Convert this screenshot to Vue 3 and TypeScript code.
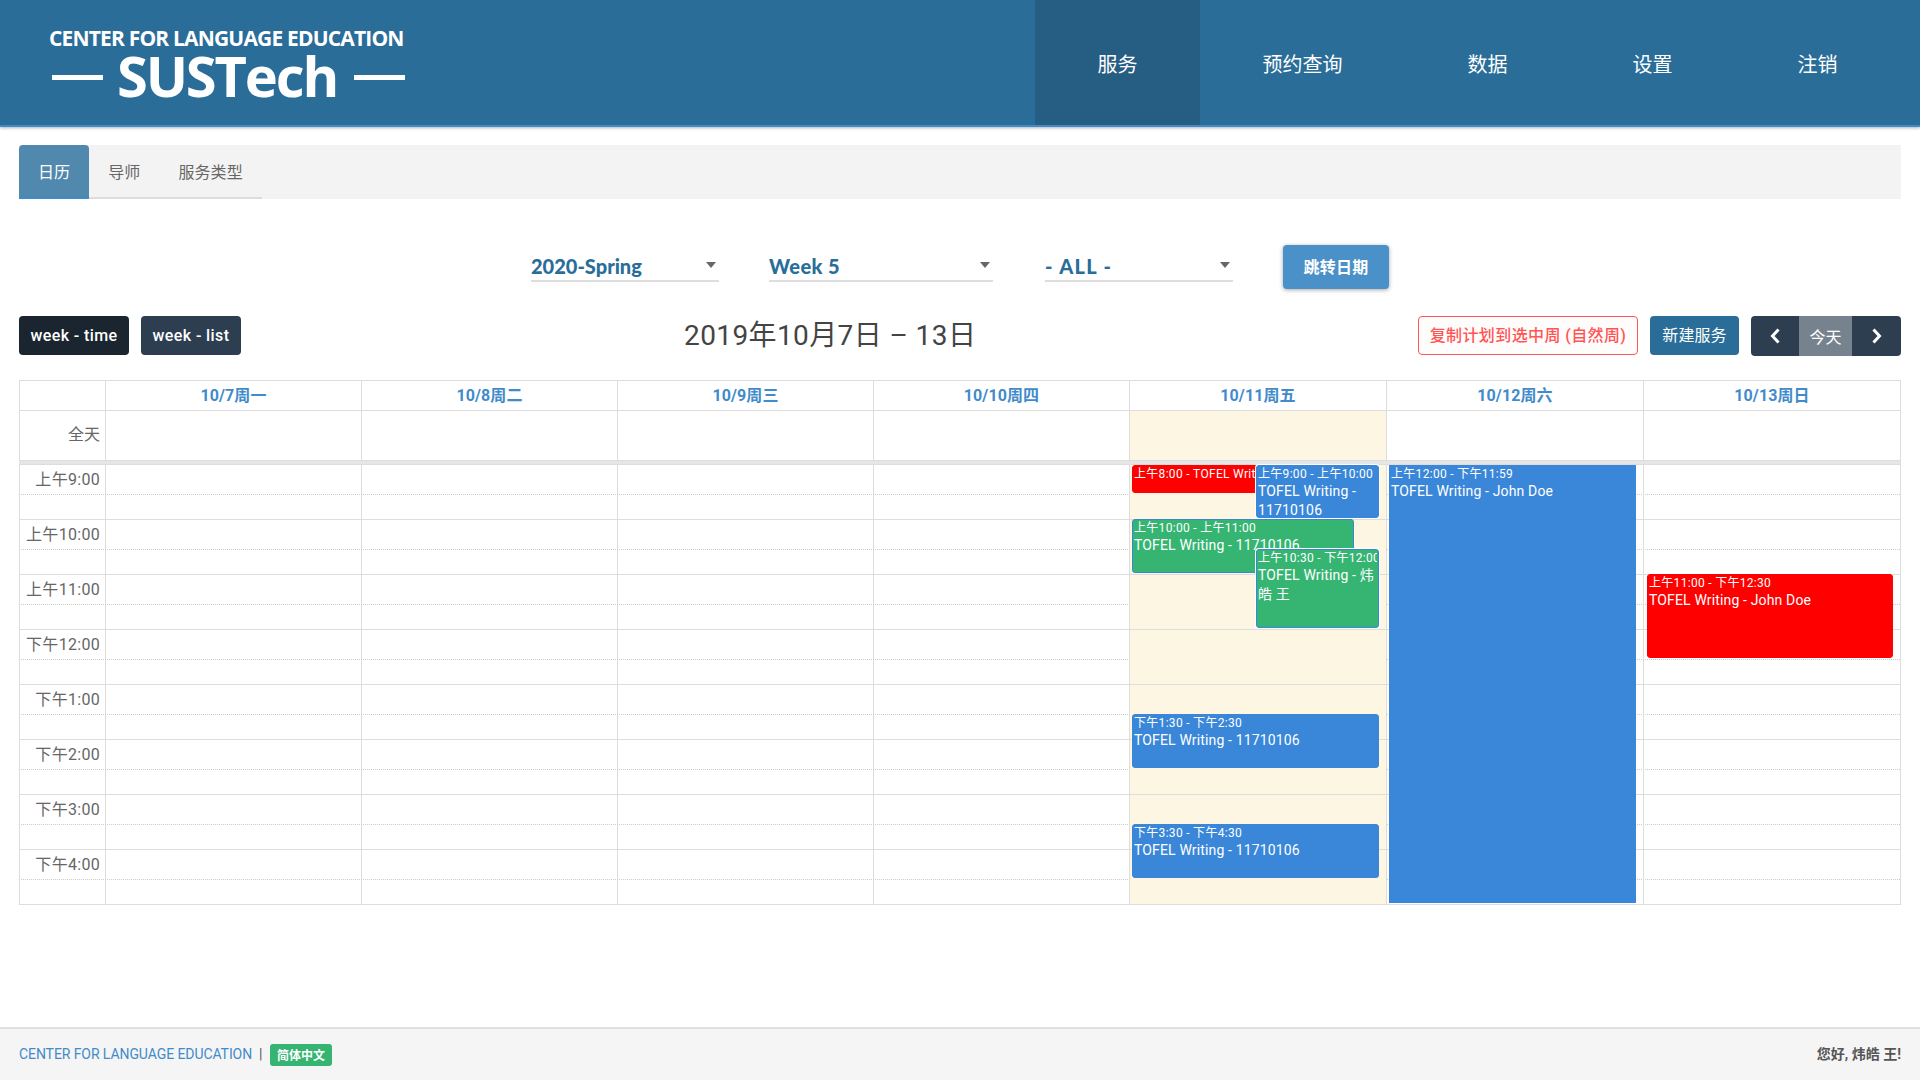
<script setup lang="ts">
interface Ev { cls: string; style: Record<string, string>; time: string; title: string }
const navItems = ['服务', '预约查询', '数据', '设置', '注销']
const tabs = ['日历', '导师', '服务类型']
const days = [
  { label: '10/7周一', today: false },
  { label: '10/8周二', today: false },
  { label: '10/9周三', today: false },
  { label: '10/10周四', today: false },
  { label: '10/11周五', today: true },
  { label: '10/12周六', today: false },
  { label: '10/13周日', today: false },
]
const hours = ['上午9:00', '上午10:00', '上午11:00', '下午12:00', '下午1:00', '下午2:00', '下午3:00', '下午4:00']
const selects = [
  { label: '2020-Spring', cls: 'sel-a' },
  { label: 'Week 5', cls: 'sel-b' },
  { label: '- ALL -', cls: 'sel-c' },
]
function box(left: number, top: number, width: number, height: number): Record<string, string> {
  return { left: `${left}px`, top: `${top}px`, width: `${width}px`, height: `${height}px` }
}
// coordinates on the time-grid canvas (origin: grid's top-left corner)
const events: Ev[] = [
  { cls: 'red', style: box(1132 - 19, 0, 224, 28), time: '上午8:00 - TOFEL Writing - 11710106', title: '' },
  { cls: 'blue inset', style: box(1256 - 19, 0, 123, 53), time: '上午9:00 - 上午10:00', title: 'TOFEL Writing - 11710106' },
  { cls: 'green', style: box(1132 - 19, 54, 222, 54), time: '上午10:00 - 上午11:00', title: 'TOFEL Writing - 11710106' },
  { cls: 'green inset', style: box(1256 - 19, 84, 123, 79), time: '上午10:30 - 下午12:00', title: 'TOFEL Writing - 炜皓 王' },
  { cls: 'blue', style: box(1132 - 19, 249, 247, 54), time: '下午1:30 - 下午2:30', title: 'TOFEL Writing - 11710106' },
  { cls: 'blue', style: box(1132 - 19, 359, 247, 54), time: '下午3:30 - 下午4:30', title: 'TOFEL Writing - 11710106' },
  { cls: 'blue square', style: box(1389 - 19, 0, 247, 438), time: '上午12:00 - 下午11:59', title: 'TOFEL Writing - John Doe' },
  { cls: 'red', style: box(1647 - 19, 109, 246, 84), time: '上午11:00 - 下午12:30', title: 'TOFEL Writing - John Doe' },
]
</script>

<template>
  <div class="page">
    <header class="topbar">
      <div class="logo">
        <div class="logo-top">CENTER FOR LANGUAGE EDUCATION</div>
        <div class="logo-main">
          <span class="dash"></span>
          <span class="logo-name">SUSTech</span>
          <span class="dash"></span>
        </div>
      </div>
      <nav class="nav">
        <a v-for="(n, i) in navItems" :key="n" class="nav-item" :class="{ active: i === 0 }">{{ n }}</a>
      </nav>
    </header>

    <div class="tabs">
      <a v-for="(t, i) in tabs" :key="t" class="tab" :class="{ active: i === 0 }">{{ t }}</a>
    </div>

    <div class="filters">
      <div v-for="s in selects" :key="s.label" class="select" :class="s.cls">
        <span>{{ s.label }}</span>
        <i class="caret"></i>
      </div>
      <button class="jump">跳转日期</button>
    </div>

    <div class="toolbar">
      <div class="tool-left">
        <button class="btn dark">week - time</button>
        <button class="btn navy">week - list</button>
      </div>
      <h2 class="title">2019年10月7日 – 13日</h2>
      <div class="tool-right">
        <button class="btn outline">复制计划到选中周 (自然周)</button>
        <button class="btn primary">新建服务</button>
        <div class="group">
          <button class="gbtn">
            <svg width="10" height="16" viewBox="0 0 10 16"><path d="M8.5 1.5 2.5 8 8.5 14.5" fill="none" stroke="#fff" stroke-width="3" /></svg>
          </button>
          <button class="gbtn today">今天</button>
          <button class="gbtn">
            <svg width="10" height="16" viewBox="0 0 10 16"><path d="M1.5 1.5 7.5 8 1.5 14.5" fill="none" stroke="#fff" stroke-width="3" /></svg>
          </button>
        </div>
      </div>
    </div>

    <section class="cal">
      <div class="row head">
        <div class="cell axis"></div>
        <div v-for="d in days" :key="d.label" class="cell day-h">{{ d.label }}</div>
      </div>
      <div class="row allday">
        <div class="cell axis lab">全天</div>
        <div v-for="d in days" :key="d.label" class="cell" :class="{ today: d.today }"></div>
      </div>
      <div class="divider"></div>
      <div class="grid">
        <template v-for="h in hours" :key="h">
          <div class="row slot major">
            <div class="cell axis lab">{{ h }}</div>
            <div v-for="d in days" :key="d.label" class="cell" :class="{ today: d.today }"></div>
          </div>
          <div class="row slot minor">
            <div class="cell axis"></div>
            <div v-for="d in days" :key="d.label" class="cell" :class="{ today: d.today }"></div>
          </div>
        </template>
        <div v-for="(e, i) in events" :key="i" class="event" :class="e.cls" :style="e.style">
          <div class="ev-time">{{ e.time }}</div>
          <div v-if="e.title" class="ev-title">{{ e.title }}</div>
        </div>
      </div>
    </section>

    <footer class="footer">
      <div class="foot-left">
        <a class="foot-link">CENTER FOR LANGUAGE EDUCATION</a>
        <span class="foot-sep">|</span>
        <span class="badge">简体中文</span>
      </div>
      <div class="foot-right">您好, 炜皓 王!</div>
    </footer>
  </div>
</template>

<style>
html, body { margin: 0; background: #fff; }
</style>

<style scoped>
.page {
  width: 1920px;
  height: 1080px;
  display: flex;
  flex-direction: column;
  overflow: hidden;
  font-family: Roboto, "Noto Sans CJK SC", sans-serif;
  font-size: 16px;
  color: #555;
  box-sizing: border-box;
}
.topbar {
  height: 125px;
  flex: none;
  background: #2a6d99;
  border-bottom: 2px solid #428bca;
  box-shadow: 0 1px 3px rgba(0, 0, 0, .3);
  display: flex;
  justify-content: space-between;
  color: #fff;
  position: relative;
}
.logo { padding: 26px 0 0 49px; width: 360px; }
.logo-top {
  font: 700 21px/24px "Open Sans", sans-serif;
  white-space: nowrap;
  letter-spacing: -.82px;
}
.logo-main { display: flex; align-items: center; height: 50px; margin-left: 3px; }
.logo-name {
  font: 700 56px/50px "Open Sans", sans-serif;
  letter-spacing: -2.15px;
  margin: 0 17px 0 14px;
}
.dash { width: 51px; height: 5px; background: #fff; flex: none; margin-top: 4px; }
.nav { display: flex; padding-right: 20px; }
.nav-item {
  padding: 0 62.5px;
  text-align: center;
  font-size: 20px;
  line-height: 127px;
  font-weight: 400;
  font-family: "Noto Sans CJK SC", sans-serif;
}
.nav-item.active { background: #265d83; }
.tabs {
  margin: 18px 19px 0;
  height: 54px;
  flex: none;
  background: #f3f3f3;
  display: flex;
}
.tab {
  box-sizing: border-box;
  padding: 0 19px;
  line-height: 52px;
  border-bottom: 2px solid #ddd;
  font-family: "Noto Sans CJK SC", sans-serif;
  font-size: 16px;
  font-weight: 400;
  color: #666;
  letter-spacing: .1px;
}
.tab.active {
  background: #5088ae;
  color: #fff;
  border-bottom-color: #428bca;
  border-radius: 4px 4px 0 0;
}
.filters {
  margin-top: 46px;
  height: 44px;
  flex: none;
  display: flex;
  align-items: flex-start;
  padding-left: 531px;
}
.select {
  height: 36px;
  box-sizing: border-box;
  border-bottom: 2px solid #ddd;
  padding-top: 5px;
  display: flex;
  justify-content: space-between;
  align-items: center;
  font: 900 20px "Lato", sans-serif;
  color: #2a6d99;
  margin-top: 1px;
}
.sel-a { width: 188px; margin-right: 50px; }
.sel-b { width: 224px; margin-right: 52px; }
.sel-b span { letter-spacing: .4px; }
.sel-c { width: 188px; margin-right: 50px; }
.sel-c span { letter-spacing: 1.3px; }
.caret {
  width: 0;
  height: 0;
  border-left: 5px solid transparent;
  border-right: 5px solid transparent;
  border-top: 6px solid #666;
  margin: 0 3px 2px 0;
}
.jump {
  width: 106px;
  height: 44px;
  border: 0;
  border-radius: 4px;
  background: #4a90c9;
  color: #fff;
  font: 700 16px "Noto Sans CJK SC", sans-serif;
  letter-spacing: .3px;
  box-shadow: 0 1px 4px rgba(0, 0, 0, .35);
  padding: 0 0 2px;
}
.toolbar {
  margin: 27px 19px 0;
  height: 40px;
  flex: none;
  display: flex;
  position: relative;
}
.tool-left { display: flex; gap: 12px; width: 665px; }
.tool-right { margin-left: auto; display: flex; gap: 12px; }
.btn {
  height: 39px;
  border: 0;
  border-radius: 4px;
  padding: 0;
  color: #fff;
  font: 500 16px Roboto, "Noto Sans CJK SC", sans-serif;
  letter-spacing: .4px;
}
.dark { width: 110px; background: #1a252f; }
.navy { width: 100px; background: #2c3e50; }
.title {
  margin: 0;
  font: 400 28px/40px Roboto, "Noto Sans CJK SC", sans-serif;
  color: #444;
  white-space: nowrap;
  letter-spacing: .4px;
}
.outline { width: 220px; background: #fffcfc; border: 1px solid #f55; color: #f55; font-size: 16px; font-weight: 500; padding-bottom: 3px; }
.primary { width: 89px; background: #2a6d99; font-weight: 400; padding-bottom: 3px; letter-spacing: .1px; }
.group { display: flex; height: 40px; border-radius: 4px; overflow: hidden; }
.gbtn {
  width: 48px;
  border: 0;
  padding: 0;
  background: #2c3e50;
  color: #fff;
  display: flex;
  align-items: center;
  justify-content: center;
  font: 400 16px Roboto, "Noto Sans CJK SC", sans-serif;
}
.gbtn.today { width: 53px; background: #76838f; }
.gbtn:last-child { width: 49px; }
.cal {
  margin: 24px 19px 0;
  flex: none;
  border-right: 1px solid #ddd;
  border-top: 1px solid #ddd;
  width: 1882px;
  box-sizing: border-box;
}
.row {
  display: grid;
  grid-template-columns: 86px 256px 256px 256px 256px 257px 257px 257px;
}
.cell { border-left: 1px solid #ddd; box-sizing: border-box; }
.head { height: 29px; border-bottom: 1px solid #ddd; box-sizing: content-box; }
.day-h {
  text-align: center;
  font-weight: 700;
  color: #428bca;
  line-height: 30px;
  letter-spacing: .1px;
}
.allday { height: 49px; }
.lab {
  text-align: right;
  padding: 0 5px 0 0;
  color: #666;
  font-size: 16px;
  white-space: nowrap;
  letter-spacing: .3px;
}
.allday .lab { line-height: 48px; letter-spacing: 0; }
.divider { background: #e6e6e6; border-top: 1px solid #ddd; border-bottom: 1px solid #ddd; box-sizing: border-box; height: 5px; }
.today { background: #fdf6e3; }
.grid { position: relative; }
.slot.major { height: 30px; border-bottom: 1px dotted #ccc; box-sizing: border-box; }
.slot.minor { height: 25px; border-bottom: 1px solid #ddd; box-sizing: border-box; }
.slot.major .lab { line-height: 30px; }
.event {
  position: absolute;
  box-sizing: border-box;
  border: 1px solid #3a87d9;
  border-radius: 3px;
  color: #fff;
  padding: 1px 1px 0;
  overflow: hidden;
  white-space: normal;
}
.event.red { background: #f00; border-color: #f00; }
.event.blue { background: #3a87d9; }
.event.green { background: #36b572; }
.event.inset { box-shadow: 0 0 0 1px #fff; }
.event.square { border-radius: 0; }
.ev-time { font-size: 12px; line-height: 15px; white-space: nowrap; overflow: hidden; letter-spacing: .3px; }
.ev-title { font-size: 14px; line-height: 19px; letter-spacing: .15px; margin-top: -.5px; }
.footer {
  margin-top: auto;
  height: 53px;
  flex: none;
  box-sizing: border-box;
  border-top: 2px solid #e0e0e0;
  background: #f5f5f5;
  padding: 0 19px;
  display: flex;
  align-items: center;
  justify-content: space-between;
}
.foot-left { display: flex; align-items: center; }
.foot-link { color: #428bca; font-size: 14px; letter-spacing: -.08px; margin-top: -2px; }
.foot-sep { margin: -2px 8px 0 7px; font-size: 14px; color: #555; }
.badge {
  background: #36b572;
  color: #fff;
  font: 700 12px/22px "Noto Sans CJK SC", sans-serif;
  padding: 0 6.5px;
  border-radius: 3px;
}
.foot-right { font: 700 14px Roboto, "Noto Sans CJK SC", sans-serif; color: #555; margin-top: -3px; }
</style>
